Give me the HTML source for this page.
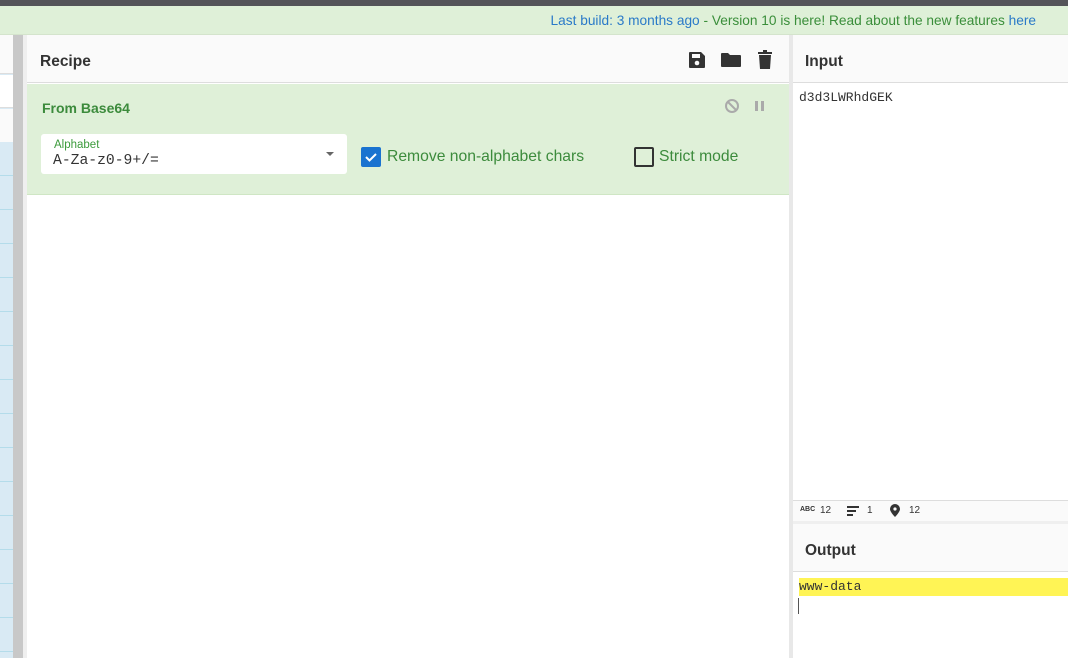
<!DOCTYPE html>
<html><head><style>
*{box-sizing:border-box;margin:0;padding:0}
body{width:1068px;height:658px;overflow:hidden;position:relative;font-family:"Liberation Sans",sans-serif;background:#fff}
.a{position:absolute}
.mono{font-family:"Liberation Mono","DejaVu Sans Mono",monospace}
.h{font-weight:bold;font-size:15.5px;color:#333}
</style></head><body>
<div class="a" style="left:0;top:0;width:1068px;height:6px;background:#545459"></div>
<div class="a" style="left:0;top:6px;width:1068px;height:29px;background:#dff0d8;border-bottom:1px solid #d4e4cc"></div>
<div class="a" style="right:32px;top:13px;font-size:13.7px;color:#3a8e3a;white-space:nowrap"><span style="color:#2a7ac8">Last build: 3 months ago</span> - Version 10 is here! Read about the new features <span style="color:#2a7ac8">here</span></div>

<!-- left strip -->
<div class="a" style="left:0;top:35px;width:13px;height:623px;background:#d9eaf4"></div>
<div class="a" style="left:0;top:35px;width:13px;height:39px;background:#fafafa;border-bottom:1px solid #ddd"></div>
<div class="a" style="left:0;top:75px;width:13px;height:33px;background:#fff;border-bottom:1px solid #ddd"></div>
<div class="a" style="left:0;top:109px;width:13px;height:33px;background:#fafafa"></div>
<div class="a" style="left:0;top:142px;width:13px;height:516px;background:repeating-linear-gradient(#d9eaf4 0 33px,#b4dcea 33px 34px)"></div>
<div class="a" style="left:13px;top:35px;width:10px;height:623px;background:#c8c8c8"></div>
<div class="a" style="left:23px;top:35px;width:4px;height:623px;background:#efefef"></div>

<!-- recipe -->
<div class="a" style="left:27px;top:35px;width:762px;height:48px;background:#fafafa;border-bottom:1px solid #ddd"></div>
<div class="a h" style="left:40px;top:53px">Recipe</div>
<svg class="a" style="left:687px;top:50px" width="20" height="20" viewBox="0 0 20 20"><path d="M2 3a1 1 0 0 1 1-1h11l4 4v11a1 1 0 0 1-1 1H3a1 1 0 0 1-1-1z M5 4v4h8V4z" fill="#333" fill-rule="evenodd"/><circle cx="10" cy="13" r="2.3" fill="#fafafa"/></svg>
<svg class="a" style="left:720px;top:51px" width="22" height="18" viewBox="0 0 22 18"><path d="M1 3a1 1 0 0 1 1-1h6l2 2h10a1 1 0 0 1 1 1v10a1 1 0 0 1-1 1H2a1 1 0 0 1-1-1z" fill="#333"/></svg>
<svg class="a" style="left:757px;top:50px" width="16" height="20" viewBox="0 0 16 20"><rect x="1" y="2" width="14" height="2" fill="#333"/><rect x="6" y="0" width="4" height="3" fill="#333"/><path d="M2 5h12l-1 14H3z" fill="#333"/></svg>
<div class="a" style="left:27px;top:84px;width:762px;height:111px;background:#dff0d8;border-bottom:1px solid #cfe6c4"></div>
<div class="a" style="left:42px;top:100px;font-size:14px;font-weight:bold;color:#3c8b3c">From Base64</div>
<svg class="a" style="left:724px;top:98px" width="16" height="16" viewBox="0 0 16 16"><circle cx="8" cy="8" r="6" fill="none" stroke="#aaa" stroke-width="2"/><path d="M4 4l8 8" stroke="#aaa" stroke-width="2"/></svg>
<div class="a" style="left:755px;top:101px;width:3px;height:10px;background:#aaa"></div>
<div class="a" style="left:761px;top:101px;width:3px;height:10px;background:#aaa"></div>
<div class="a" style="left:41px;top:134px;width:306px;height:40px;background:#fff;border-radius:3px"></div>
<div class="a" style="left:54px;top:139px;font-size:11.5px;color:#3c9b3c">Alphabet</div>
<div class="a mono" style="left:53px;top:153px;font-size:14.7px;color:#333">A-Za-z0-9+/=</div>
<div class="a" style="left:326px;top:152px;border-left:4px solid transparent;border-right:4px solid transparent;border-top:4px solid #666"></div>
<div class="a" style="left:361px;top:147px;width:20px;height:20px;background:#1a73d0;border-radius:2px"></div>
<svg class="a" style="left:361px;top:147px" width="20" height="20"><path d="M5 10l3.5 3.5L15 7" fill="none" stroke="#fff" stroke-width="2"/></svg>
<div class="a" style="left:387px;top:148px;font-size:15.7px;color:#3c8b3c">Remove non-alphabet chars</div>
<div class="a" style="left:634px;top:147px;width:20px;height:20px;border:2px solid #333;border-radius:2px"></div>
<div class="a" style="left:659px;top:148px;font-size:15.7px;color:#3c8b3c">Strict mode</div>

<div class="a" style="left:789px;top:35px;width:4px;height:623px;background:#e8e8e8"></div>

<!-- input -->
<div class="a" style="left:793px;top:35px;width:275px;height:48px;background:#fafafa;border-bottom:1px solid #ddd"></div>
<div class="a h" style="left:805px;top:53px">Input</div>
<div class="a mono" style="left:799px;top:90px;font-size:13px;color:#333">d3d3LWRhdGEK</div>
<div class="a" style="left:793px;top:500px;width:275px;height:21px;background:#fafafa;border-top:1px solid #ddd;font-size:10px;color:#333"></div>
<div class="a" style="left:800px;top:506px;font-size:7px;font-weight:bold;color:#333">ABC</div>
<div class="a" style="left:820px;top:505px;font-size:10px;color:#333">12</div>
<div class="a" style="left:847px;top:506px;width:12px;height:2px;background:#333"></div>
<div class="a" style="left:847px;top:510px;width:9px;height:2px;background:#333"></div>
<div class="a" style="left:847px;top:514px;width:6px;height:2px;background:#333"></div>
<div class="a" style="left:867px;top:505px;font-size:10px;color:#333">1</div>
<svg class="a" style="left:890px;top:504px" width="10" height="13" viewBox="0 0 10 13"><path d="M5 0a5 5 0 0 1 5 5c0 3-5 8-5 8S0 8 0 5a5 5 0 0 1 5-5z" fill="#333"/><circle cx="5" cy="5" r="1.6" fill="#fafafa"/></svg>
<div class="a" style="left:909px;top:505px;font-size:10px;color:#333">12</div>
<div class="a" style="left:793px;top:521px;width:275px;height:3px;background:#efefef"></div>
<div class="a" style="left:793px;top:524px;width:275px;height:48px;background:#fafafa;border-bottom:1px solid #ddd"></div>
<div class="a h" style="left:805px;top:542px">Output</div>
<div class="a" style="left:799px;top:578px;width:269px;height:18px;background:#fff455"></div>
<div class="a mono" style="left:799px;top:579px;font-size:13px;color:#333">www-data</div>
<div class="a" style="left:798px;top:598px;width:1px;height:16px;background:#555"></div>
</body></html>
